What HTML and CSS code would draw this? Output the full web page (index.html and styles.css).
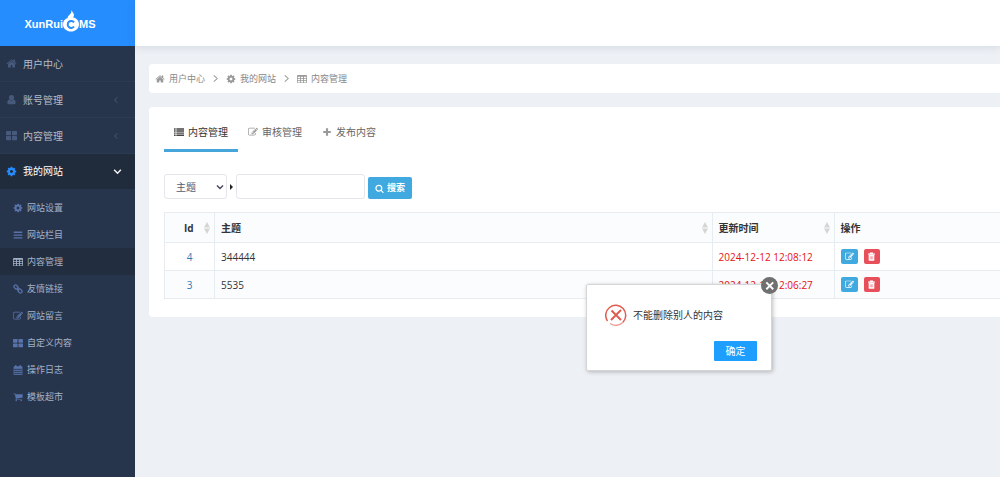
FILE: index.html
```html
<!DOCTYPE html>
<html lang="zh-CN">
<head>
<meta charset="utf-8">
<title>内容管理 - XunRuiCMS</title>
<link rel="stylesheet" href="styles.css">
</head>
<body>
<svg class="sprite" aria-hidden="true">
  <symbol id="home" viewBox="0 0 1792 1792"><path d="M1472 992v480q0 26-19 45t-45 19h-384v-384h-256v384h-384q-26 0-45-19t-19-45v-480q0-1 .5-3t.5-3l575-474 575 474q1 2 1 6zm223-69l-62 74q-8 9-21 11h-3q-13 0-21-7l-692-577-692 577q-12 8-24 7-13-2-21-11l-62-74q-8-10-7-23.500t11-21.500l719-599q32-26 76-26t76 26l244 204v-195q0-14 9-23t23-9h192q14 0 23 9t9 23v408l219 182q10 8 11 21.500t-7 23.500z"/></symbol>
  <symbol id="user" viewBox="0 0 16 16"><circle cx="8" cy="5" r="3.700"/><path d="M4.500 8c-2 .6-2.500 2.700-2.500 4.800C2 14.300 3 15 4.300 15h7.400c1.300 0 2.300-.7 2.300-2.200 0-2.100-.5-4.200-2.500-4.800-1 1-2.200 1.500-3.500 1.500S5.500 9 4.500 8z"/></symbol>
  <symbol id="grid" viewBox="0 0 16 16"><rect x="0" y="1.500" width="7.300" height="6" rx="1"/><rect x="8.700" y="1.500" width="7.300" height="6" rx="1"/><rect x="0" y="8.800" width="7.300" height="6" rx="1"/><rect x="8.700" y="8.800" width="7.300" height="6" rx="1"/></symbol>
  <symbol id="cog" viewBox="0 0 1792 1792"><path d="M1152 896q0-106-75-181t-181-75-181 75-75 181 75 181 181 75 181-75 75-181zm512-109v222q0 12-8 23t-20 13l-185 28q-19 54-39 91 35 50 107 138 10 12 10 25t-9 23q-27 37-99 108t-94 71q-12 0-26-9l-138-108q-44 23-91 38-16 136-29 186-7 28-36 28h-222q-14 0-24.500-8.500t-11.500-21.500l-28-184q-49-16-90-37l-141 107q-10 9-25 9-14 0-25-11-126-114-165-168-7-10-7-23 0-12 8-23 15-21 51-66.500t54-70.500q-27-50-41-99l-183-27q-13-2-21-12.500t-8-23.500v-222q0-12 8-23t19-13l186-28q14-46 39-92-40-57-107-138-10-12-10-24 0-10 9-23 26-36 98.500-107.500t94.500-71.500q13 0 26 10l138 107q44-23 91-38 16-136 29-186 7-28 36-28h222q14 0 24.500 8.500t11.500 21.500l28 184q49 16 90 37l142-107q9-9 24-9 13 0 25 10 129 119 165 170 7 8 7 22 0 12-8 23-15 21-51 66.500t-54 70.500q26 50 41 98l183 28q13 2 21 12.500t8 23.500z"/></symbol>
  <symbol id="bars" viewBox="0 0 16 16"><rect x="1" y="2.500" width="14" height="2.200" rx=".6"/><rect x="1" y="7" width="14" height="2.200" rx=".6"/><rect x="1" y="11.500" width="14" height="2.200" rx=".6"/></symbol>
  <symbol id="table" viewBox="0 0 16 16"><path fill-rule="evenodd" d="M1.500 1.500h13Q16 1.500 16 3v10q0 1.500-1.500 1.500h-13Q0 14.500 0 13V3q0-1.500 1.500-1.500zM1.200 4.500v2.200h3.600V4.500zm5 0v2.200h3.600V4.500zm5 0v2.200h3.600V4.500zm-10 3.400v2.200h3.600V7.900zm5 0v2.200h3.600V7.900zm5 0v2.200h3.600V7.900zm-10 3.400v2.200h3.600v-2.200zm5 0v2.200h3.600v-2.200zm5 0v2.200h3.600v-2.200z"/></symbol>
  <symbol id="link" viewBox="0 0 16 16"><g fill="none" stroke="currentColor" stroke-width="2"><rect x="1.300" y="2.400" width="7" height="5" rx="2.300" transform="rotate(45 4.800 4.900)"/><rect x="7.700" y="8.600" width="7" height="5" rx="2.300" transform="rotate(45 11.200 11.100)"/><path d="M6 6l4 4"/></g></symbol>
  <symbol id="edit" viewBox="0 0 1792 1792"><path d="M888 1184l116-116-152-152-116 116v56h96v96h56zm440-720q-16-16-33 1l-350 350q-17 17-1 33t33-1l350-350q17-17 1-33zm80 594v190q0 119-84.500 203.500t-203.500 84.500h-832q-119 0-203.500-84.500t-84.500-203.500v-832q0-119 84.500-203.500t203.500-84.500h832q63 0 117 25 15 7 18 23 3 17-9 29l-49 49q-14 14-32 8-23-6-45-6h-832q-66 0-113 47t-47 113v832q0 66 47 113t113 47h832q66 0 113-47t47-113v-126q0-13 9-22l64-64q15-15 35-7t20 29zm-96-738l288 288-672 672h-288v-288zm444 132l-92 92-288-288 92-92q28-28 68-28t68 28l152 152q28 28 28 68t-28 68z"/></symbol>
  <symbol id="calendar" viewBox="0 0 16 16"><path fill-rule="evenodd" d="M3.500 0h2v2h5V0h2v2H14q1 0 1 1v12q0 1-1 1H2q-1 0-1-1V3q0-1 1-1h1.500zM2.200 6v2h2.200V6zm3.200 0v2h2.200V6zm3.100 0v2h2.200V6zm3.100 0v2h2.200V6zM2.200 9v2.300h2.200V9zm3.200 0v2.300h2.200V9zm3.100 0v2.300h2.200V9zm3.100 0v2.300h2.200V9zM2.200 12.300v2.500h2.200v-2.500zm3.200 0v2.500h2.200v-2.500zm3.100 0v2.500h2.200v-2.500zm3.100 0v2.500h2.200v-2.500z"/></symbol>
  <symbol id="cart" viewBox="0 0 1792 1792"><path d="M704 1536q0 52-38 90t-90 38-90-38-38-90 38-90 90-38 90 38 38 90zm896 0q0 52-38 90t-90 38-90-38-38-90 38-90 90-38 90 38 38 90zm128-1088v512q0 24-16.500 42.500t-40.500 21.500l-1044 122q13 60 13 70 0 16-24 64h920q26 0 45 19t19 45-19 45-45 19h-1024q-26 0-45-19t-19-45q0-11 8-31.500t16-36 21.500-40 15.500-29.500l-177-823h-204q-26 0-45-19t-19-45 19-45 45-19h256q16 0 28.500 6.500t19.500 15.500 13 24.500 8 26 5.500 29.500 4.500 26h1201q26 0 45 19t19 45z"/></symbol>
  <symbol id="list" viewBox="0 0 16 16"><path d="M0 2h2.600v2.300H0zM3.800 2H16v2.300H3.800zM0 5.300h2.600v2.300H0zM3.800 5.300H16v2.300H3.800zM0 8.600h2.600v2.300H0zM3.800 8.600H16v2.300H3.800zM0 11.900h2.600v2.300H0zM3.800 11.900H16v2.300H3.800z"/></symbol>
  <symbol id="plus" viewBox="0 0 16 16"><path d="M6.300 2h3.400v4.300H14v3.400H9.700V14H6.300V9.700H2V6.300h4.300z"/></symbol>
  <symbol id="search" viewBox="0 0 1792 1792"><path d="M1216 832q0-185-131.500-316.500t-316.500-131.500-316.500 131.500-131.500 316.500 131.500 316.500 316.500 131.500 316.500-131.500 131.500-316.500zm512 832q0 52-38 90t-90 38q-54 0-90-38l-343-342q-179 124-399 124-143 0-273.500-55.500t-225-150-150-225-55.500-273.500 55.500-273.500 150-225 225-150 273.500-55.500 273.500 55.500 225 150 150 225 55.500 273.500q0 220-124 399l343 343q37 37 37 90z"/></symbol>
  <symbol id="trash" viewBox="0 0 16 16"><path fill-rule="evenodd" d="M5.500 1h5l.8 1.800H14v1.900H2V2.800h2.700zM3 5.300h10V14q0 1.500-1.300 1.500H4.300Q3 15.500 3 14zM5.200 7.500V13h.8V7.500zm2.400 0V13h.8V7.500zm2.400 0V13h.8V7.500z"/></symbol>
  <symbol id="right" viewBox="0 0 16 16"><path d="M5 2.500l6 5.500-6 5.500" fill="none" stroke="currentColor" stroke-width="1.800"/></symbol>
  <symbol id="left" viewBox="0 0 16 16"><path d="M11 2.500L5 8l6 5.500" fill="none" stroke="currentColor" stroke-width="1.800"/></symbol>
  <symbol id="down" viewBox="0 0 16 16"><path d="M2 5l6 6 6-6" fill="none" stroke="currentColor" stroke-width="2.800"/></symbol>
  <symbol id="sort" viewBox="0 0 6 12"><path d="M3 0l3 5.500H0zM0 6.500h6L3 12z"/></symbol>
</svg>

<div class="layout">
  <aside class="sidebar">
    <a class="logo" href="#">
      <span>XunRui</span>
      <svg class="flame" viewBox="0 0 16 22" aria-hidden="true"><path fill="#fff" d="M8.500 0c.8 2.500 2.500 3.300 2.500 5 0 .9-.6 1.800-.8 2.500C13.500 8.200 16 10.600 16 14.200c0 4.300-3.600 7.300-8 7.300s-8-3-8-7.300c0-3 1.800-5.200 4.500-6.200C5 5 8.800 4.500 8.500 0z"/><path d="M11 12.300a3.500 3.500 0 1 0 0 4.200" fill="none" stroke="#268dff" stroke-width="2"/></svg>
      <span>MS</span>
    </a>
    <nav class="menu">
      <a class="item" href="#"><svg class="icon"><use href="#home"/></svg><span>用户中心</span></a>
      <a class="item" href="#"><svg class="icon"><use href="#user"/></svg><span>账号管理</span><svg class="arrow"><use href="#left"/></svg></a>
      <a class="item" href="#"><svg class="icon"><use href="#grid"/></svg><span>内容管理</span><svg class="arrow"><use href="#left"/></svg></a>
      <a class="item open" href="#"><svg class="icon"><use href="#cog"/></svg><span>我的网站</span><svg class="arrow"><use href="#down"/></svg></a>
      <div class="submenu">
        <a class="subitem" href="#"><svg class="icon"><use href="#cog"/></svg>网站设置</a>
        <a class="subitem" href="#"><svg class="icon"><use href="#bars"/></svg>网站栏目</a>
        <a class="subitem active" href="#"><svg class="icon"><use href="#table"/></svg>内容管理</a>
        <a class="subitem" href="#"><svg class="icon"><use href="#link"/></svg>友情链接</a>
        <a class="subitem" href="#"><svg class="icon"><use href="#edit"/></svg>网站留言</a>
        <a class="subitem" href="#"><svg class="icon"><use href="#grid"/></svg>自定义内容</a>
        <a class="subitem" href="#"><svg class="icon"><use href="#calendar"/></svg>操作日志</a>
        <a class="subitem" href="#"><svg class="icon"><use href="#cart"/></svg>模板超市</a>
      </div>
    </nav>
  </aside>

  <div class="page">
    <header class="topbar"></header>
    <main class="content">
      <nav class="crumbs" aria-label="面包屑">
        <a href="#"><svg class="icon"><use href="#home"/></svg>用户中心</a>
        <svg class="sep"><use href="#right"/></svg>
        <a href="#"><svg class="icon"><use href="#cog"/></svg>我的网站</a>
        <svg class="sep"><use href="#right"/></svg>
        <a href="#"><svg class="icon"><use href="#table"/></svg>内容管理</a>
      </nav>

      <section class="card">
        <nav class="tabs">
          <a class="tab current" href="#"><svg class="icon"><use href="#list"/></svg>内容管理</a>
          <a class="tab" href="#"><svg class="icon"><use href="#edit"/></svg>审核管理</a>
          <a class="tab" href="#"><svg class="icon"><use href="#plus"/></svg>发布内容</a>
        </nav>

        <form class="filter">
          <span class="picker">
            <select class="field select" aria-label="搜索字段"><option>主题</option></select>
            <svg class="chevron"><use href="#down"/></svg>
          </span>
          <span class="caret"></span>
          <input class="field keyword" type="text" aria-label="关键词">
          <button class="search" type="button"><svg class="icon"><use href="#search"/></svg>搜索</button>
        </form>

        <table class="list">
          <colgroup><col class="col-id"><col><col class="col-time"><col class="col-action"></colgroup>
          <thead>
            <tr>
              <th class="id"><div class="head">Id<svg class="sort"><use href="#sort"/></svg></div></th>
              <th><div class="head">主题<svg class="sort"><use href="#sort"/></svg></div></th>
              <th><div class="head">更新时间<svg class="sort"><use href="#sort"/></svg></div></th>
              <th>操作</th>
            </tr>
          </thead>
          <tbody>
            <tr>
              <td class="id"><a href="#">4</a></td>
              <td>344444</td>
              <td class="time">2024-12-12 12:08:12</td>
              <td><div class="actions"><button class="act edit" type="button" aria-label="修改"><svg class="icon"><use href="#edit"/></svg></button><button class="act delete" type="button" aria-label="删除"><svg class="icon"><use href="#trash"/></svg></button></div></td>
            </tr>
            <tr>
              <td class="id"><a href="#">3</a></td>
              <td>5535</td>
              <td class="time">2024-12-12 12:06:27</td>
              <td><div class="actions"><button class="act edit" type="button" aria-label="修改"><svg class="icon"><use href="#edit"/></svg></button><button class="act delete" type="button" aria-label="删除"><svg class="icon"><use href="#trash"/></svg></button></div></td>
            </tr>
          </tbody>
        </table>
      </section>
    </main>
  </div>
</div>

<div class="dialog" role="alertdialog" aria-labelledby="message">
  <button class="close" type="button" aria-label="关闭"><svg viewBox="0 0 16 16"><path d="M5 5l6.500 6.500M11.500 5L5 11.500" fill="none" stroke="#fff" stroke-width="1.800"/></svg></button>
  <div class="message">
    <svg class="error" viewBox="0 0 22 22" aria-hidden="true"><g fill="none" stroke="#df5d50"><path d="M2.500 17A10 10 0 1 1 18 18.200" stroke-width="1.500"/><path d="M18 18.200A10 10 0 0 1 5 19.500" stroke-width="1.300" opacity=".6"/><path d="M6.500 6.500l9.500 9.500M16 6l-10 10" stroke-width="2"/></g></svg>
    <span id="message">不能删除别人的内容</span>
  </div>
  <div class="buttons"><button class="confirm" type="button">确定</button></div>
</div>
</body>
</html>
```

FILE: styles.css
```css
* { box-sizing: border-box; }

body {
  margin: 0;
  background: #edf0f5;
  color: #333;
  font: 10px/16px "Open Sans", "Noto Sans CJK SC", sans-serif;
}

a { color: inherit; text-decoration: none; }
button, input, select { margin: 0; font: inherit; }
button { border: 0; padding: 0; cursor: pointer; }
svg { fill: currentColor; flex: none; }

.sprite { position: absolute; width: 0; height: 0; }
.icon { width: 10px; height: 10px; }

.layout {
  display: grid;
  grid-template-columns: 135px minmax(0, 1fr);
  min-height: 100vh;
}

/* Sidebar */
.sidebar { background: #27354c; color: #b4bcc8; }

.logo {
  display: flex;
  justify-content: center;
  align-items: center;
  height: 46px;
  padding-right: 15px;
  background: #268dff;
  color: #fff;
  font: bold 11px/16px "Liberation Sans", Arial, sans-serif;
}
.flame { width: 16px; height: 22px; margin-bottom: 5px; }
.logo span { padding-top: 2px; }

.item {
  display: flex;
  align-items: center;
  gap: 6px;
  height: 36px;
  padding: 0 13px 0 6px;
  border-bottom: 1px solid #2c3b54;
}
.item .icon { width: 11px; height: 11px; color: #485a7c; }
.arrow { width: 8px; height: 8px; margin-left: auto; margin-right: 2px; color: #485a7c; }
.item.open { height: 35px; background: #202b3c; border-color: #202b3c; color: #fff; }
.item.open .icon { color: #268dff; }
.item.open .arrow { width: 9px; height: 9px; margin-right: 0; color: #f1f1f1; }

.submenu { padding: 5px 0; }
.subitem {
  display: flex;
  align-items: center;
  gap: 4px;
  height: 27px;
  padding-left: 13px;
  color: #a3b1c8;
  font-size: 9px;
}
.subitem .icon { color: #5873aa; }
.subitem.active { background: #222d3f; }
.subitem.active .icon { color: #a3b1c8; }

/* Page */
.topbar { height: 46px; background: #fff; box-shadow: 0 1px 8px rgba(60, 75, 100, .14); }
.content { padding: 18px 0 18px 14px; }

.crumbs {
  display: flex;
  align-items: center;
  gap: 6px;
  height: 29px;
  padding: 0 6px;
  border-radius: 4px 0 0 4px;
  background: #fff;
  color: #888;
  font-size: 9px;
}
.crumbs a { display: flex; align-items: center; gap: 4px; }
.crumbs .icon { color: #999; }
.sep { width: 9px; height: 9px; color: #999; }

.card {
  margin-top: 14px;
  padding: 8px 0 18px 15px;
  border-radius: 4px 0 0 4px;
  background: #fff;
}

.tabs { display: flex; color: #666; }
.tab {
  display: flex;
  align-items: center;
  gap: 4px;
  height: 37px;
  padding: 0 10px;
  border-bottom: 3px solid transparent;
}
.tab .icon { color: #999; }
.tab.current { border-color: #46a6dc; color: #333; }
.tab.current .icon { color: #444; }

.filter { display: flex; align-items: center; gap: 3px; margin-top: 22px; }
.field {
  height: 25px;
  border: 1px solid #e4e6ee;
  border-radius: 3px;
  background: #fff;
  color: #555b70;
}
.picker { display: grid; align-items: center; }
.picker > * { grid-area: 1 / 1; }
.select { width: 63px; padding: 0 11px; appearance: none; }
.chevron { width: 8px; height: 8px; margin-right: 3px; justify-self: end; pointer-events: none; color: #45455c; }
.caret { border: 3px solid transparent; border-left-color: #222; border-right: 0; }
.keyword { width: 129px; padding: 0 8px; }
.search {
  display: flex;
  justify-content: center;
  align-items: center;
  gap: 3px;
  width: 44px;
  height: 22px;
  margin-top: 3px;
  border-radius: 2px;
  background: #3fa9e0;
  color: #fff;
  font-size: 9px;
  font-weight: bold;
}
.search .icon { width: 9px; height: 9px; }

.list {
  width: 100%;
  margin-top: 13px;
  border-collapse: collapse;
  table-layout: fixed;
}
.col-id { width: 50px; }
.col-time { width: 122px; }
.col-action { width: 166px; }
.list th, .list td {
  height: 28px;
  padding: 0 6px;
  border: 1px solid #e7ecf1;
  border-right: 0;
  text-align: left;
}
.list th { height: 30px; background: #fbfcfd; }
.list tbody tr:nth-child(even) { background: #fbfcfd; }
.list .id { text-align: center; }
.list .id a { color: #337ab7; }
.list .time { color: #e81010; }
.head { display: flex; justify-content: space-between; align-items: center; }
.id .head { padding-left: 13px; }
.list th .head { margin-right: -2px; }
.sort { width: 6px; height: 12px; color: #d5d5d5; }

.actions { display: flex; gap: 6px; }
.act {
  display: grid;
  place-items: center;
  width: 17px;
  height: 15px;
  border-radius: 2px;
  color: #fff;
}
.act .icon { width: 9px; height: 9px; }
.act.edit { background: #3fa9e0; }
.act.delete { width: 16px; background: #e7505a; }

/* Dialog */
.dialog {
  position: absolute;
  left: 586px;
  top: 284px;
  width: 186px;
  padding: 19px 14px 9px 18px;
  border: 1px solid #d5d5d5;
  border-radius: 2px;
  background: #fff;
  box-shadow: 1px 1px 4px rgba(0, 0, 0, .25);
}
.message { display: flex; align-items: center; gap: 6px; }
.error { width: 22px; height: 22px; }
.buttons { display: flex; justify-content: flex-end; margin-top: 15px; }
.confirm { width: 43px; height: 20px; border-radius: 1px; background: #1e9fff; color: #fff; }
.close {
  position: absolute;
  top: -8px;
  right: -7px;
  width: 17px;
  height: 17px;
  border-radius: 50%;
  background: #707070;
}
.close svg { display: block; width: 17px; height: 17px; }
```
